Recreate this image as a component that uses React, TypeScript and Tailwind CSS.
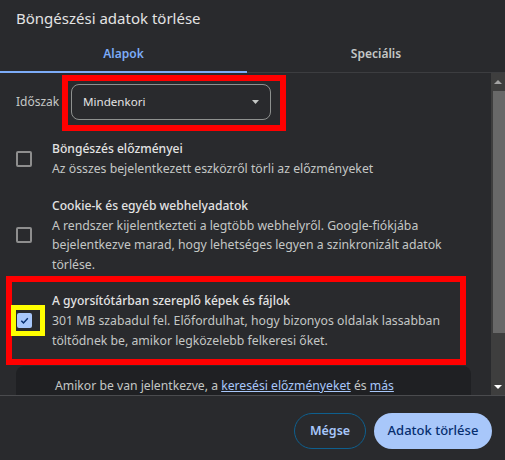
import React from "react";

const font = { fontFamily: '"Segoe UI", "Noto Sans", "Open Sans", sans-serif' };

function Unchecked() {
  return <div className="w-[16px] h-[16px] shrink-0 rounded-[2px] border-2 border-[#8e8e8e]" />;
}

function Checked() {
  return (
    <div className="w-[15px] h-[15px] shrink-0 rounded-[2px] bg-[#a8c7fa] flex items-center justify-center">
      <svg width="11" height="11" viewBox="0 0 12 12">
        <path d="M2.5 6.3 L4.9 8.6 L9.6 3.6" fill="none" stroke="#062e6f" strokeWidth="1.6" />
      </svg>
    </div>
  );
}

function Item({ checked, title, lines }: { checked?: boolean; title: string; lines: string[] }) {
  return (
    <div className="flex items-center">
      <div className="w-[36px] flex">{checked ? <div className="ml-[1px]"><Checked /></div> : <Unchecked />}</div>
      <div className="flex flex-col">
        <div className="text-[12.1px] leading-[20px] font-medium text-[#e3e3e3] whitespace-nowrap">{title}</div>
        {lines.map((l, i) => (
          <div key={i} className="text-[12.25px] leading-[19.5px] text-[#c4c7c5] whitespace-nowrap">{l}</div>
        ))}
      </div>
    </div>
  );
}

export default function App() {
  return (
    <div className="w-[505px] h-[460px] bg-[#292a2d] flex flex-col overflow-hidden relative" style={font}>
      <div className="h-[36px] px-4 flex items-center text-[15px] text-[#e3e3e3]">Böngészési adatok törlése</div>
      <div className="h-[37px] flex border-b border-[#3c3d40] text-[12px] font-semibold">
        <div className="w-[247px] relative flex items-center justify-center text-[#7cacf8]">
          Alapok
          <div className="absolute left-0 right-0 bottom-[-1px] h-[2px] bg-[#7cacf8]" />
        </div>
        <div className="flex-1 flex items-center justify-center text-[#c4c7c5]">Speciális</div>
      </div>
      <div className="h-[322px] flex">
        <div className="flex-1 overflow-hidden px-4 pt-[11px]">
          <div className="flex items-center h-[36px]">
            <div className="w-[55px] text-[12px] text-[#c4c7c5]">Időszak</div>
            <div className="w-[200px] h-[36px] rounded-[8px] border border-[#8e918f] flex items-center justify-between pl-[11px] pr-[11px]">
              <span className="text-[11.6px] text-[#e3e3e3]">Mindenkori</span>
              <svg width="7" height="4" viewBox="0 0 7 4"><path d="M0 0 H7 L3.5 4 Z" fill="#c4c7c5" /></svg>
            </div>
          </div>
          <div className="mt-[19px] flex flex-col gap-[17px]">
            <Item title="Böngészés előzményei" lines={["Az összes bejelentkezett eszközről törli az előzményeket"]} />
            <Item
              title="Cookie-k és egyéb webhelyadatok"
              lines={[
                "A rendszer kijelentkezteti a legtöbb webhelyről. Google-fiókjába",
                "bejelentkezve marad, hogy lehetséges legyen a szinkronizált adatok",
                "törlése.",
              ]}
            />
            <Item
              checked
              title="A gyorsítótárban szereplő képek és fájlok"
              lines={[
                "301 MB szabadul fel. Előfordulhat, hogy bizonyos oldalak lassabban",
                "töltődnek be, amikor legközelebb felkeresi őket.",
              ]}
            />
          </div>
          <div className="mt-[16px] w-[455px] h-[60px] rounded-[8px] bg-[#1f2023] pl-[39px] pt-[10px] text-[12.2px] leading-[20px] text-[#c4c7c5] whitespace-nowrap">
            Amikor be van jelentkezve, a <span className="text-[#a8c7fa] underline">keresési előzményeket</span> és{" "}
            <span className="text-[#a8c7fa] underline">más</span>
          </div>
        </div>
        <div className="w-[14px] bg-[#3e3e3e] flex flex-col items-stretch">
          <div className="h-[18px] flex items-center justify-center">
            <svg width="8" height="4" viewBox="0 0 8 4"><path d="M0 4 H8 L4 0 Z" fill="#a3a3a3" /></svg>
          </div>
          <div className="ml-[2px] h-[242px] bg-[#686868]" />
          <div className="flex-1 flex items-end justify-center pb-[6px]">
            <svg width="8" height="4" viewBox="0 0 8 4"><path d="M0 0 H8 L4 4 Z" fill="#ffffff" /></svg>
          </div>
        </div>
      </div>
      <div className="flex-1 border-t border-[#4a4b4e] flex justify-end items-start pt-[17px] pr-[13px] gap-[8px]">
        <div className="w-[72px] h-[36px] rounded-full border border-[#0e5f8e] flex items-center justify-center text-[12.5px] font-semibold text-[#a8c7fa]">Mégse</div>
        <div className="w-[118px] h-[36px] rounded-full bg-[#a8c7fa] flex items-center justify-center text-[13px] font-medium text-[#062e6f]">Adatok törlése</div>
      </div>
      <div className="absolute left-[62px] top-[75px] w-[224px] h-[56px] border-[6px] border-[#ff0000]" />
      <div className="absolute left-[6px] top-[276px] w-[460px] h-[89px] border-[6px] border-[#ff0000]" />
      <div className="absolute left-[11px] top-[305px] w-[34px] h-[31px] border-[5px] border-[#ffff00]" />
    </div>
  );
}
